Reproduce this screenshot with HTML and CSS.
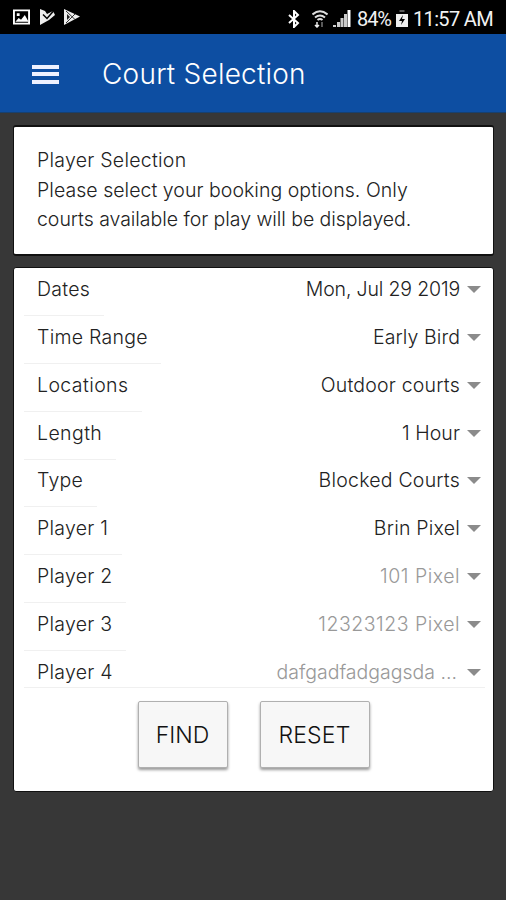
FILE: index.html
```html
<!DOCTYPE html>
<html lang="en">
<head>
<meta charset="utf-8">
<title>Court Selection</title>
<link rel="stylesheet" href="styles.css">
</head>
<body>
<div class="status">
  <div class="status-left">
    <svg width="17" height="16" viewBox="0 0 18 16"><path fill="#fff" fill-rule="evenodd" d="M0 0h18v16H0zM2 2v12h14V2z"/><path fill="#fff" d="M2.500 13l3.500-4 2.500 2 4-5 4 7zM4 4h3v3H4z"/></svg>
    <svg width="15" height="16" viewBox="0 0 15 16"><path fill="#eee" d="M0 0l5 2 2 3 6-3 2 4-6 5-9 5z"/><path d="M3 5.500l4 4 6.500-7.500" fill="none" stroke="#000" stroke-width="1.500"/></svg>
    <svg width="16" height="16" viewBox="0 0 16 16"><path fill="#eee" d="M0 0l16 7.500L0 16z"/><path d="M2 2l9 8.500M2 14l9-9" fill="none" stroke="#333" stroke-width="1"/><path d="M3 5v6l3-3z" fill="#222"/></svg>
  </div>
  <div class="status-right">
    <svg class="bt" width="12" height="18" viewBox="0 0 12 18"><path d="M1 5l9 8-4 4V1l4 4-9 8" fill="none" stroke="#fff" stroke-width="2"/></svg>
    <svg class="wifi" width="16" height="18" viewBox="0 0 16 18"><path d="M.5 4.500Q8-2 15.500 4.500M3 7.500q5-4 10 0M5.500 10q2.500-2 5 0" fill="none" stroke="#ddd" stroke-width="2"/><path d="M5 12v5m-2-2l2 2 2-2" fill="none" stroke="#eee" stroke-width="1.500"/><path d="M10 17v-5" stroke="#777" stroke-width="1.500"/></svg>
    <svg class="signal" width="18" height="18" viewBox="0 0 18 18"><path d="M0 15h3v2H0zM4 12h3v5H4zM7.500 8h3v9h-3zM11 4h3v13h-3z" fill="#ccc"/><path d="M14.500 0h3v17h-3z" fill="#fff"/></svg>
    <span class="pct">84%</span>
    <svg class="battery" width="12" height="18" viewBox="0 0 12 18"><path d="M3.500 0h5v2h-5z" fill="#555"/><path d="M0 4h12v13H0z" fill="#eee"/><path d="M7 5l-4 6h3l-1 4 4-6H6z" fill="#000"/></svg>
    <span class="clock">11:57 AM</span>
  </div>
</div>
<header class="appbar">
  <div class="burger"><i></i><i></i><i></i></div>
  <h1>Court Selection</h1>
</header>
<main>
  <section class="card intro">
    <p class="intro-title">Player Selection</p>
    <p class="intro-one">Please select your booking options. Only</p>
    <p class="intro-two">courts available for play will be displayed.</p>
  </section>
  <section class="card form">
    <div class="rows">
      <div class="row"><label>Dates</label><span class="date">Mon, Jul 29 2019</span><b></b></div>
      <div class="row"><label>Time Range</label><span>Early Bird</span><b></b></div>
      <div class="row"><label class="roomy">Locations</label><span class="wide">Outdoor courts</span><b></b></div>
      <div class="row"><label class="roomy">Length</label><span>1 Hour</span><b></b></div>
      <div class="row"><label>Type</label><span class="wide">Blocked Courts</span><b></b></div>
      <div class="row"><label>Player 1</label><span class="wide">Brin Pixel</span><b></b></div>
      <div class="row"><label>Player 2</label><span class="muted id">101 Pixel</span><b></b></div>
      <div class="row"><label>Player 3</label><span class="muted id">12323123 Pixel</span><b></b></div>
      <div class="row last"><label>Player 4</label><span class="muted cut">dafgadfadgagsda ...</span><b></b></div>
    </div>
    <div class="actions"><button class="find">FIND</button><button class="reset">RESET</button></div>
  </section>
</main>
</body>
</html>
```

FILE: styles.css
```css
* { box-sizing: border-box; }
body { margin: 0; height: 900px; overflow: hidden; background: #373737; font-family: Inter, "Liberation Sans", sans-serif; font-weight: 300; color: #222; }
svg { display: block; flex: none; }
.status { height: 34px; background: #000; color: #f2f2f2; display: flex; justify-content: space-between; padding: 0 13px; }
.status-left { display: flex; gap: 9.5px; padding-top: 9px; }
.status-right { display: flex; align-items: center; padding-top: 3px; font: 400 20px/34px Roboto, sans-serif; white-space: nowrap; }
.bt { margin-right: 1px; }
.wifi { margin-left: 11px; }
.signal { margin-left: 5px; }
.pct { margin-left: 6px; width: 35px; letter-spacing: -1.1px; }
.battery { margin-left: 4px; }
.clock { margin-left: 5px; width: 80px; letter-spacing: -.65px; }
.appbar { height: 79px; background: #0d4ea2; border-bottom: 1px solid #17406f; display: flex; align-items: center; padding: 2px 0 0 32px; color: #fff; }
.burger { width: 27px; display: grid; gap: 3.5px; }
.burger i { height: 4px; background: #eef1ff; }
h1 { margin: 0 0 0 43px; font-size: 28px; font-weight: 300; letter-spacing: .22px; line-height: 36px; white-space: nowrap; }
main { padding: 12px 12px 0 13px; }
.card { background: #fff; border: 1px solid #111; border-radius: 3px; }
.intro { height: 131px; padding: 19px 23px; border-width: 2px 1px; }
p { margin: 0; font-size: 19.5px; line-height: 29.5px; white-space: nowrap; }
.intro-title { letter-spacing: .26px; }
.intro-one { letter-spacing: .04px; }
.intro-two { letter-spacing: -.04px; }
.form { margin-top: 11px; height: 525px; }
.rows { padding: 0 8px 0 10px; height: 420px; }
.row { height: 47.85px; display: flex; align-items: flex-start; font-size: 19.5px; line-height: 43px; white-space: nowrap; }
.row label { height: 48px; padding: 0 13.5px 0 13px; border-bottom: 1px solid #f0f0f0; letter-spacing: .25px; }
.row .roomy { letter-spacing: .4px; }
.row span { margin-left: auto; letter-spacing: .08px; }
.row b { margin: 18px 4px 0 7px; border: 7px solid transparent; border-top-color: #8b8b8b; border-bottom: 0; }
.row .muted { color: #999; }
.row .date { letter-spacing: -.16px; }
.row .wide { letter-spacing: .22px; }
.row .id { letter-spacing: .5px; }
.row.last { height: 37px; border-bottom: 1px solid #f0f0f0; }
.row.last label { height: 36px; border: 0; }
.row .cut { margin-right: 3px; letter-spacing: 0; }
.actions { display: flex; justify-content: center; gap: 32px; padding: 13px 0 0; }
button { height: 67px; padding: 0; border: 1px solid #b0b0b0; border-radius: 2px; background: #f7f7f7; box-shadow: 0 2px 3px rgba(0,0,0,.4); font: 300 23px/60px Inter, sans-serif; color: #111; white-space: nowrap; }
.find { width: 90px; }
.reset { width: 110px; letter-spacing: .2px; }
```
